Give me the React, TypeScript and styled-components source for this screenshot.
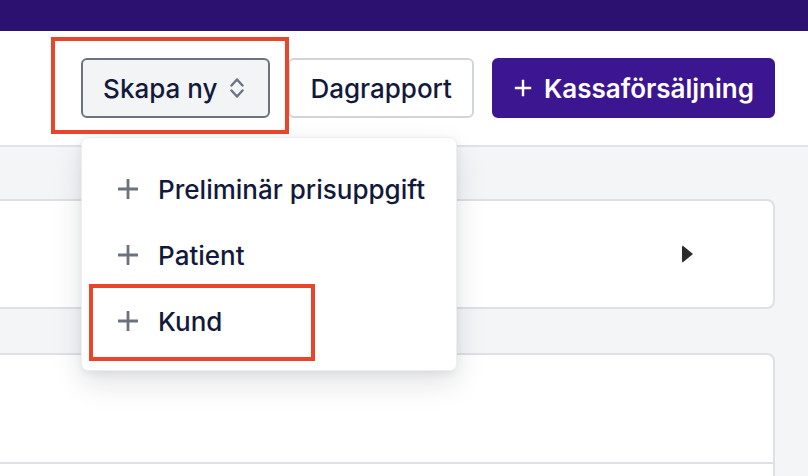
import React from "react";
import styled, { createGlobalStyle } from "styled-components";

const Global = createGlobalStyle`
  html, body { margin: 0; padding: 0; }
  body {
    font-family: Inter, "Noto Sans", "Liberation Sans", sans-serif;
    background: #f4f5f7;
    color: #111827;
    overflow: hidden;
  }
`;

const Page = styled.div`
  width: 808px;
  height: 476px;
  display: flex;
  flex-direction: column;
  overflow: hidden;
  background: #f4f5f7;
`;

const TopBar = styled.div`
  height: 31px;
  background: #2d1170;
  flex-shrink: 0;
`;

const Header = styled.header`
  height: 114px;
  background: #ffffff;
  border-bottom: 2px solid #dfe2e6;
  display: flex;
  align-items: center;
  justify-content: flex-end;
  padding-right: 33px;
  gap: 18px;
  flex-shrink: 0;
`;

const Anchor = styled.div`
  position: relative;
`;

const Highlight = styled.span<{ $l: number; $r: number; $t: number; $b: number }>`
  position: absolute;
  left: ${(p) => p.$l}px;
  right: ${(p) => p.$r}px;
  top: ${(p) => p.$t}px;
  bottom: ${(p) => p.$b}px;
  border: 4px solid #e8452b;
  pointer-events: none;
  z-index: 5;
`;

const Button = styled.button<{ $variant: "select" | "outline" | "primary" }>`
  height: 60px;
  box-sizing: border-box;
  border-radius: 6px;
  font-family: inherit;
  font-size: 26px;
  font-weight: ${(p) => (p.$variant === "primary" ? 600 : 500)};
  display: flex;
  align-items: center;
  gap: ${(p) => (p.$variant === "primary" ? 12 : 13)}px;
  padding: 0 ${(p) => (p.$variant === "select" ? 24 : p.$variant === "primary" ? 19 : 20)}px 0 20px;
  cursor: pointer;
  color: ${(p) => (p.$variant === "primary" ? "#ffffff" : "#13193a")};
  background: ${(p) =>
    p.$variant === "select" ? "#f3f4f6" : p.$variant === "primary" ? "#3c1591" : "#ffffff"};
  border: 2px solid
    ${(p) =>
      p.$variant === "select" ? "#6b7280" : p.$variant === "primary" ? "#3c1591" : "#d1d5db"};
`;

const Menu = styled.div`
  position: absolute;
  top: 79px;
  left: 0;
  width: 376px;
  box-sizing: border-box;
  background: #ffffff;
  border-radius: 7px;
  border: 1px solid #eceef1;
  box-shadow: 0 12px 30px rgba(17, 24, 39, 0.12), 0 3px 8px rgba(17, 24, 39, 0.06);
  padding: 18px 0 16px;
  z-index: 4;
`;

const MenuItem = styled.div`
  position: relative;
  height: 66px;
  display: flex;
  align-items: center;
  gap: 19px;
  padding-left: 35px;
  font-size: 26px;
  font-weight: 500;
  color: #13193a;
`;

const Main = styled.main`
  flex: 1;
  display: flex;
  flex-direction: column;
  gap: 44px;
  padding: 52px 33px 0 0;
  margin-left: -20px;
`;

const Card = styled.section<{ $h: number }>`
  height: ${(p) => p.$h}px;
  flex-shrink: 0;
  box-sizing: border-box;
  background: #ffffff;
  border: 2px solid #dde0e5;
  border-radius: 8px;
  display: flex;
  flex-direction: column;
`;

const CardRow = styled.div`
  flex: 1;
  display: flex;
  align-items: center;
  justify-content: flex-end;
  padding-right: 80px;
`;

const CardSection = styled.div`
  height: 107px;
  border-bottom: 2px solid #dde0e5;
  flex-shrink: 0;
`;

const Caret = styled.span`
  width: 0;
  height: 0;
  border-top: 9px solid transparent;
  border-bottom: 9px solid transparent;
  border-left: 11px solid #2b2b2b;
  border-radius: 2px;
`;

const Plus = ({ size, color, stroke }: { size: number; color: string; stroke: number }) => (
  <svg width={size} height={size} viewBox="0 0 22 22" fill="none">
    <path d="M11 1v20M1 11h20" stroke={color} strokeWidth={stroke} strokeLinecap="butt" />
  </svg>
);

const UpDown = () => (
  <svg width="14" height="22" viewBox="0 0 14 22" fill="none">
    <path d="M1.5 8.5 7 2.5l5.5 6M1.5 13.5 7 19.5l5.5-6" stroke="#6b7280" strokeWidth="2.4" strokeLinecap="round" strokeLinejoin="round" />
  </svg>
);

export default function App() {
  return (
    <Page>
      <Global />
      <TopBar />
      <Header>
        <Anchor>
          <Highlight $l={-30} $r={-19} $t={-21} $b={-16} />
          <Button $variant="select">
            Skapa ny <UpDown />
          </Button>
          <Menu>
            <MenuItem>
              <Plus size={22} color="#6b7280" stroke={2.8} />
              Preliminär prisuppgift
            </MenuItem>
            <MenuItem>
              <Plus size={22} color="#6b7280" stroke={2.8} />
              Patient
            </MenuItem>
            <MenuItem>
              <Highlight $l={7} $r={141} $t={-4} $b={-7} />
              <Plus size={22} color="#6b7280" stroke={2.8} />
              Kund
            </MenuItem>
          </Menu>
        </Anchor>
        <Button $variant="outline">Dagrapport</Button>
        <Button $variant="primary">
          <Plus size={18} color="#ffffff" stroke={3} />
          Kassaförsäljning
        </Button>
      </Header>
      <Main>
        <Card $h={110}>
          <CardRow>
            <Caret />
          </CardRow>
        </Card>
        <Card $h={200}>
          <CardSection />
        </Card>
      </Main>
    </Page>
  );
}
